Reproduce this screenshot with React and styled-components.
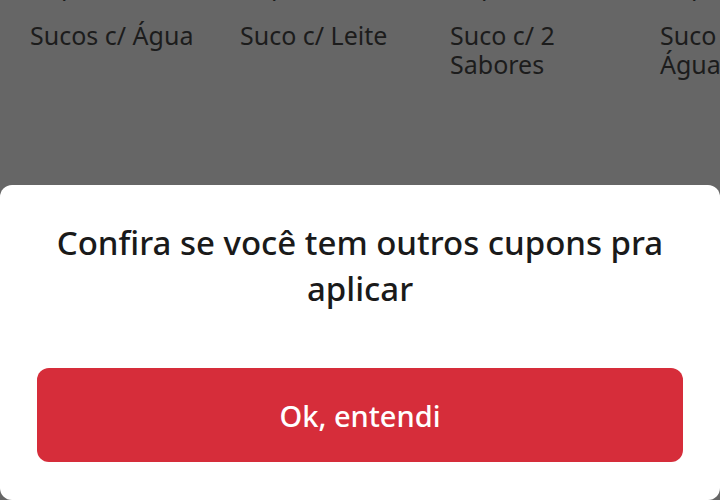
import React from 'react'
import styled, { createGlobalStyle } from 'styled-components'

const GlobalStyle = createGlobalStyle`
    html, body {
        margin: 0;
        padding: 0;
        background: #666666;
    }
    body {
        font-family: "Noto Sans", "Open Sans", sans-serif;
    }
`

const categories = [
    { top: 'Copo c/', label: 'Sucos c/ Água' },
    { top: 'Copo c/', label: 'Suco c/ Leite' },
    { top: 'Copo c/', label: 'Suco c/ 2 Sabores' },
    { top: 'Copo c/', label: 'Suco c/ Água', narrow: true },
]

export default function App() {
    return <Screen>
        <GlobalStyle />
        <Categories>
            {categories.map((c, i) => <Category key={i} $narrow={c.narrow}>
                <Cut>{c.top}</Cut>
                <Label>{c.label}</Label>
            </Category>)}
        </Categories>
        <Sheet>
            <Title>Confira se você tem outros cupons pra aplicar</Title>
            <Button>Ok, entendi</Button>
        </Sheet>
    </Screen>
}

const Screen = styled.div`
    width: 720px;
    height: 500px;
    overflow: hidden;
    background: #666666;
    display: flex;
    flex-direction: column;
`
const Categories = styled.div`
    display: flex;
    gap: 30px;
    padding-left: 30px;
    margin-top: -30px;
    white-space: nowrap;
`
const Category = styled.div`
    flex: 0 0 ${p => p.$narrow ? '110px' : '180px'};
    display: flex;
    flex-direction: column;
    gap: 21px;
`
const Cut = styled.div`
    font-size: 25px;
    line-height: 30px;
    color: #1c1c1c;
`
const Label = styled.div`
    font-size: 25px;
    line-height: 29px;
    color: #1c1c1c;
    white-space: normal;
`
const Sheet = styled.div`
    margin-top: auto;
    height: 315px;
    box-sizing: border-box;
    background: #ffffff;
    border-radius: 12px;
    padding: 35px 37px 38px;
    display: flex;
    flex-direction: column;
    justify-content: space-between;
`
const Title = styled.h2`
    margin: 0;
    padding: 0 10px;
    text-align: center;
    font-size: 33px;
    line-height: 46px;
    font-weight: 500;
    color: #1a1a1a;
`
const Button = styled.button`
    height: 94px;
    border: none;
    border-radius: 12px;
    background: #d62d3a;
    color: #ffffff;
    font-family: inherit;
    font-size: 29px;
    font-weight: 500;
`
